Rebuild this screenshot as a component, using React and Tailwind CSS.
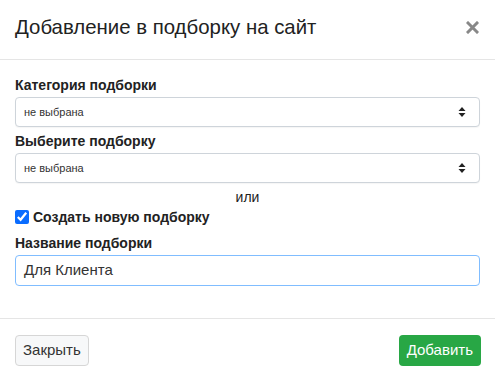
import React from "react";

const SelectArrows = () => (
  <svg width="8" height="12" viewBox="0 0 8 12" className="text-[#222]">
    <path d="M4 1 L7.5 5 H0.5 Z" fill="currentColor" />
    <path d="M4 11 L7.5 7 H0.5 Z" fill="currentColor" />
  </svg>
);

const FakeSelect = ({ value }) => (
  <div className="h-[30px] flex items-center justify-between border border-[#ced4da] rounded-[4px] pl-[8px] pr-[13px] bg-white shadow-[0_1px_1px_rgba(0,0,0,0.04)]">
    <span className="text-[11px] text-[#333]">{value}</span>
    <SelectArrows />
  </div>
);

const Label = ({ children, className = "" }) => (
  <div className={"h-[20px] leading-[20px] text-[14px] font-bold text-[#222] " + className}>
    {children}
  </div>
);

export default function App() {
  return (
    <div
      className="w-[495px] h-[377px] bg-white flex flex-col text-[#212529]"
      style={{ fontFamily: '"Liberation Sans", Arial, sans-serif' }}
    >
      <div className="h-[60px] shrink-0 flex items-center justify-between pl-[15px] pr-[16px] pb-[4px] border-b border-[#e5e5e5]">
        <h5 className="text-[20.4px] text-[#222]">Добавление в подборку на сайт</h5>
        <svg width="13" height="13" viewBox="0 0 13 13" className="mb-[1px]">
          <path d="M2 2 L11 11 M11 2 L2 11" stroke="#888" strokeWidth="3" strokeLinecap="square" />
        </svg>
      </div>

      <div className="flex-1 px-[15px] pt-[15px]">
        <Label className="mb-[2px]">Категория подборки</Label>
        <FakeSelect value="не выбрана" />
        <Label className="mt-[4px] mb-[2px]">Выберите подборку</Label>
        <FakeSelect value="не выбрана" />
        <div className="mt-[4px] h-[20px] leading-[20px] text-[14px] text-center text-[#222]">или</div>
        <label className="h-[20px] flex items-center gap-[4px] text-[14px] font-bold text-[#222]">
          <input type="checkbox" defaultChecked className="w-[14px] h-[14px] m-0 accent-[#0a6cff]" />
          Создать новую подборку
        </label>
        <Label className="mt-[6px] mb-[2px]">Название подборки</Label>
        <div className="h-[31px] flex items-center border border-[#80bdff] rounded-[4px] pl-[8px] text-[15px] text-[#333]">
          Для Клиента
        </div>
      </div>

      <div className="h-[59px] shrink-0 border-t border-[#e5e5e5] flex items-start justify-between px-[14px] pt-[16px]">
        <button className="h-[31px] ml-[1px] px-[7px] border border-[#d6d6d6] rounded-[4px] bg-[#f7f8f9] text-[15px] text-[#333]">
          Закрыть
        </button>
        <button className="h-[31px] px-[8px] rounded-[4px] bg-[#28a745] text-[15px] text-white">
          Добавить
        </button>
      </div>
    </div>
  );
}
